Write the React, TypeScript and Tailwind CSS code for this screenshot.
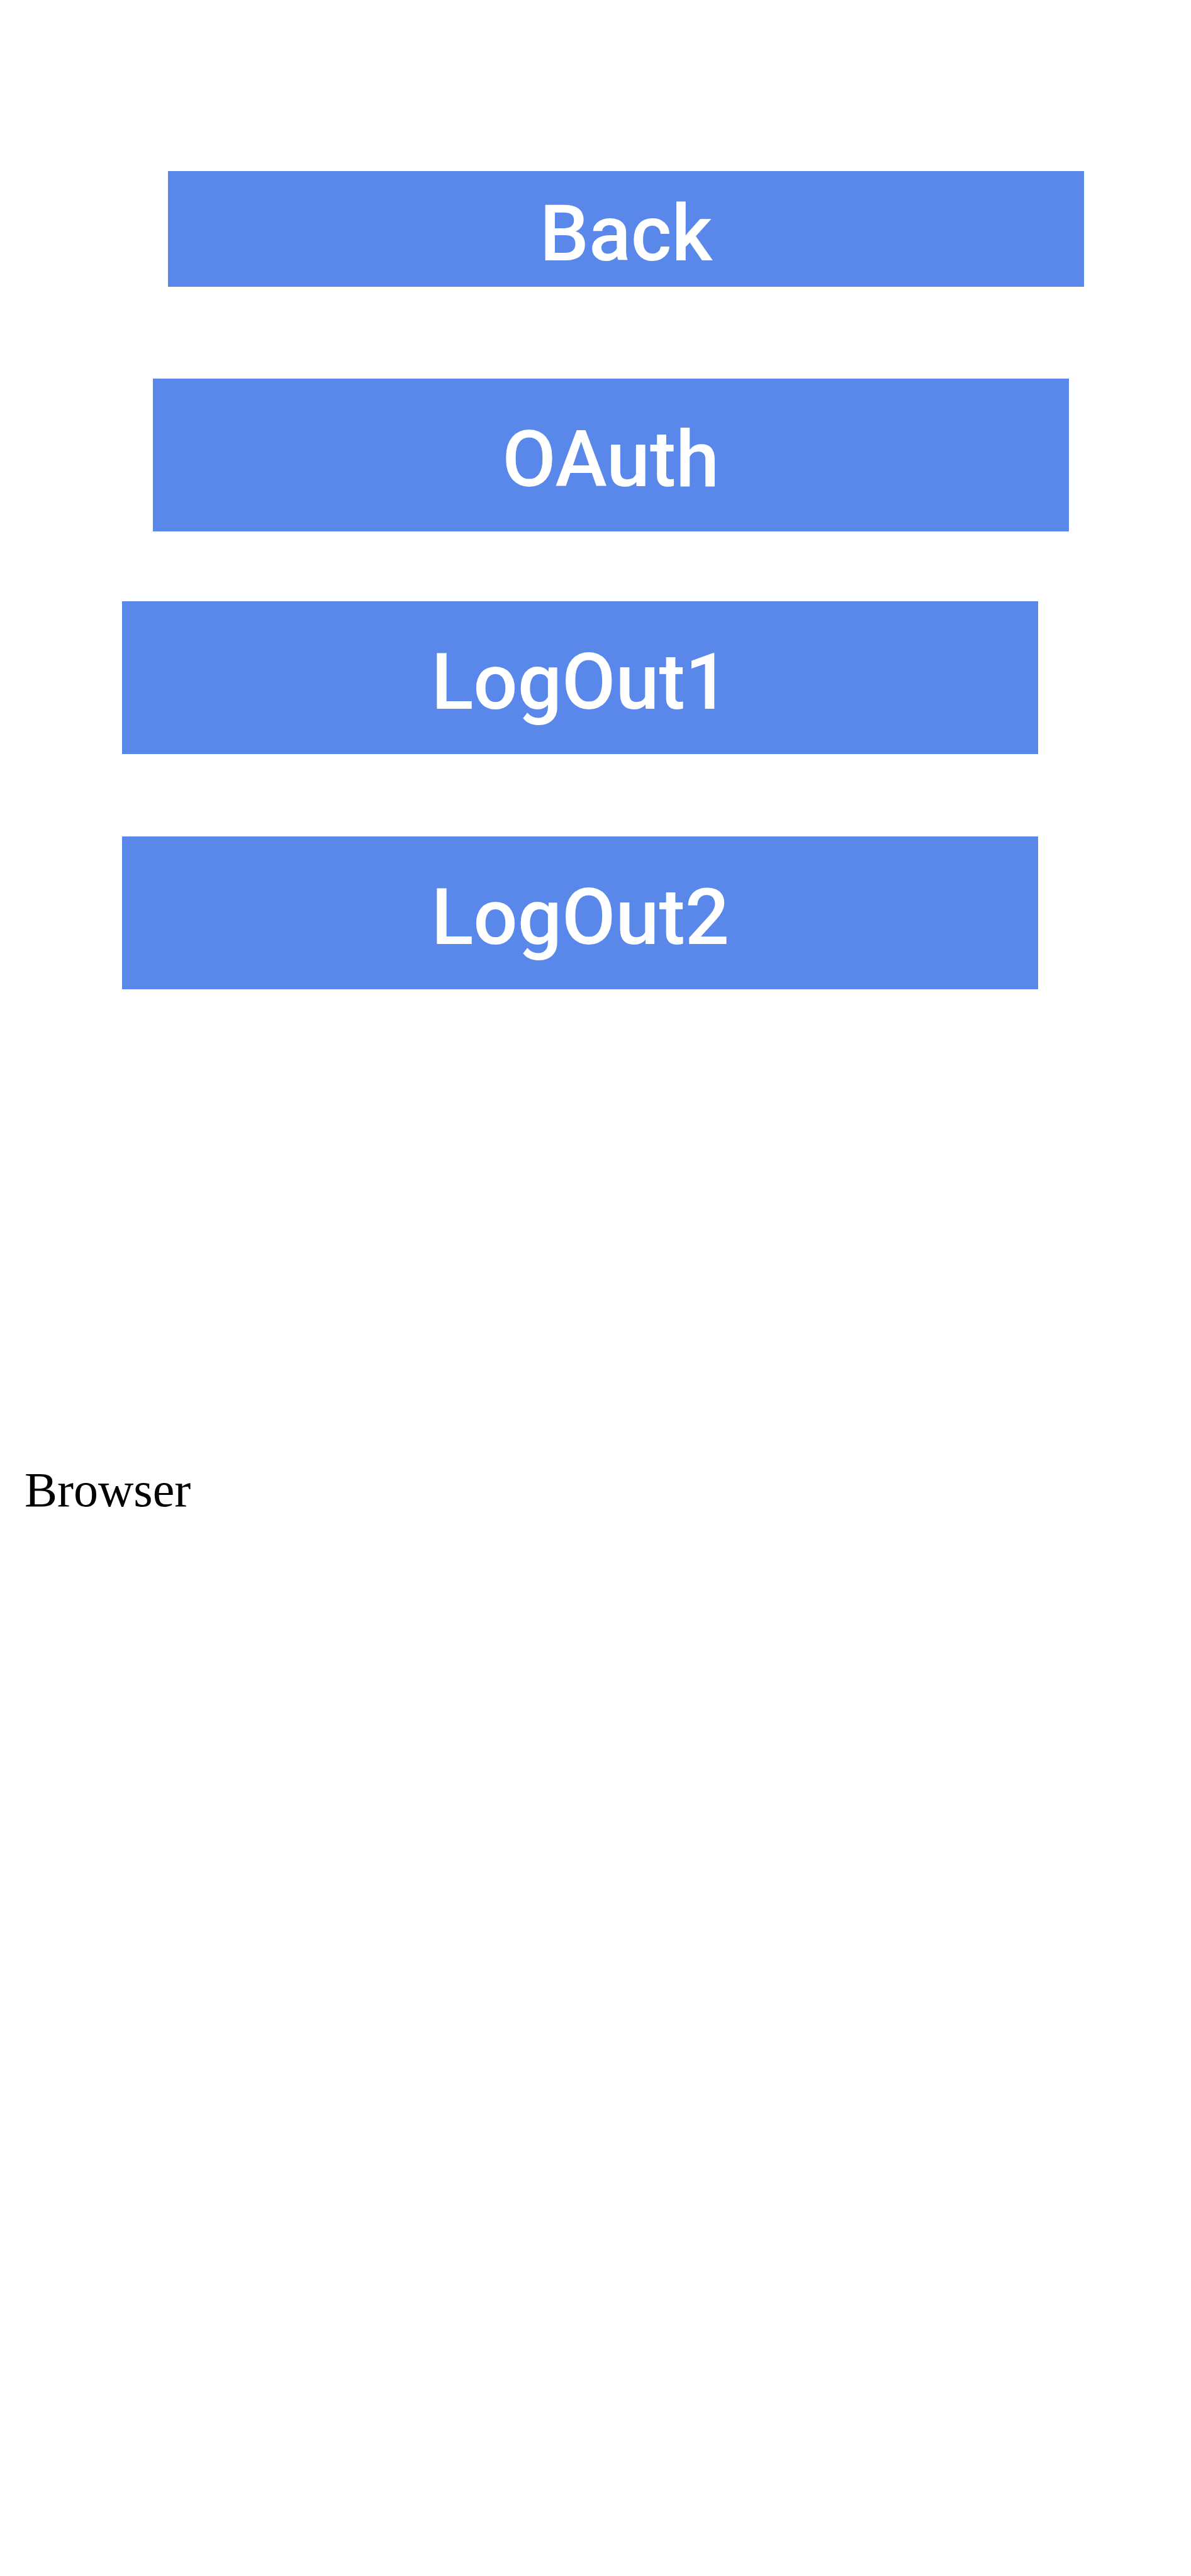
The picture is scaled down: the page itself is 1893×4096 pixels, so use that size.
const actions = [
  { label: "Back", box: "mt-[272px] ml-[14.1%] pt-[38px] pb-[22px]" },
  { label: "OAuth", box: "mt-[146px] ml-[12.82%] pt-[67px] pb-[52px]" },
  { label: "LogOut1", box: "mt-[111px] ml-[10.26%] pt-[67px] pb-[52px]" },
  { label: "LogOut2", box: "mt-[131px] ml-[10.26%] pt-[67px] pb-[52px]" },
];

export default function App() {
  return (
    <main className="flex min-h-screen flex-col bg-white">
      {actions.map((action) => (
        <button
          key={action.label}
          type="button"
          className={`${action.box} w-[76.92%] bg-[#5a88ea] text-center font-['Roboto',sans-serif] text-[124px] leading-none font-medium text-white`}
        >
          {action.label}
        </button>
      ))}
      <p className="mt-[751px] pl-[39px] font-['Liberation_Serif',serif] text-[78px] leading-[90px] text-black">
        Browser
      </p>
    </main>
  );
}
